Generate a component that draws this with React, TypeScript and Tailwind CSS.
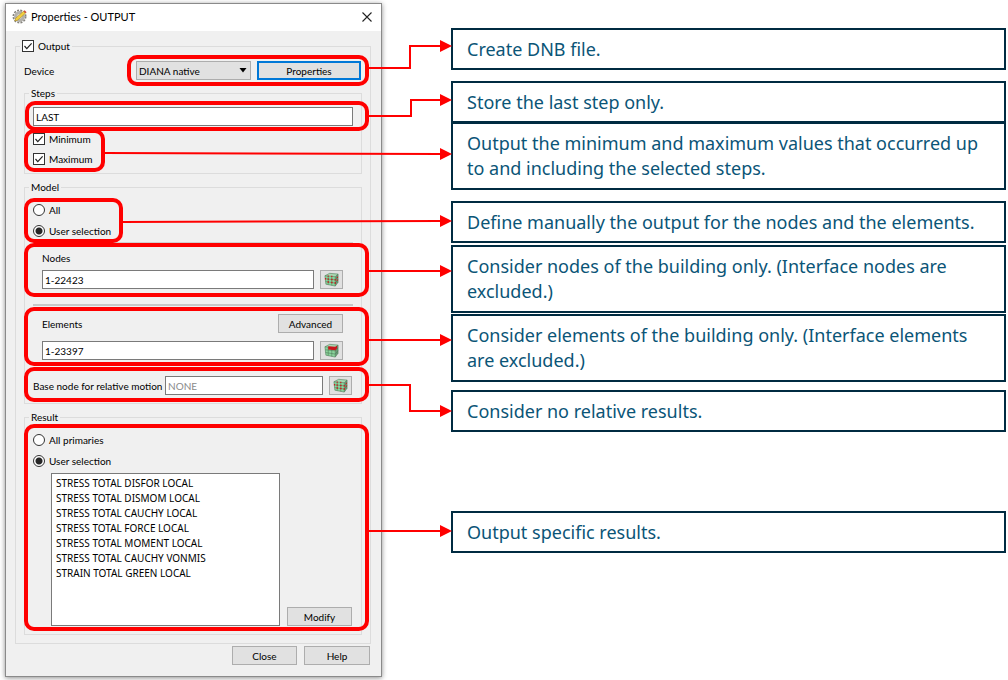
import type { ReactNode } from 'react';

const results = [
  'STRESS TOTAL DISFOR LOCAL',
  'STRESS TOTAL DISMOM LOCAL',
  'STRESS TOTAL CAUCHY LOCAL',
  'STRESS TOTAL FORCE LOCAL',
  'STRESS TOTAL MOMENT LOCAL',
  'STRESS TOTAL CAUCHY VONMIS',
  'STRAIN TOTAL GREEN LOCAL',
];

const callouts = [
  { text: 'Create DNB file.', box: 'mt-7 min-h-[42px]' },
  { text: 'Store the last step only.', box: 'mt-[11px] min-h-[42px]' },
  {
    text: 'Output the minimum and maximum values that occurred up to and including the selected steps.',
    box: '-mt-px min-h-[68px]',
  },
  { text: 'Define manually the output for the nodes and the elements.', box: 'mt-[11px] min-h-[42px]' },
  { text: 'Consider nodes of the building only. (Interface nodes are excluded.)', box: 'mt-0.5 min-h-[68px]' },
  {
    text: 'Consider elements of the building only. (Interface elements are excluded.)',
    box: 'mt-px min-h-[68px]',
  },
  { text: 'Consider no relative results.', box: 'mt-2 min-h-[42px]' },
  { text: 'Output specific results.', box: 'mt-[79px] min-h-[42px]' },
];

// Line from a highlighted group to the tip of its arrow head
const connectors = [
  { line: 'M368 68H410V46H441', y: 46 },
  { line: 'M369 116H411V100H441', y: 100 },
  { line: 'M104 153L441 154', y: 154 },
  { line: 'M122 222L441 221', y: 221 },
  { line: 'M368 271H441', y: 271 },
  { line: 'M368 340H441', y: 340 },
  { line: 'M368 385H410V411H441', y: 411 },
  { line: 'M368 531H441', y: 531 },
];

function Highlight({ className }: { className: string }) {
  return (
    <span
      aria-hidden="true"
      className={`pointer-events-none absolute rounded-[10px] border-4 border-[#ff0000] ${className}`}
    />
  );
}

function GroupBox({ title, className = '', children }: { title: string; className?: string; children: ReactNode }) {
  return (
    <fieldset className={`min-w-0 border border-[#dcdcdc] px-2 ${className}`}>
      <legend className="-ml-1 h-3.5 px-0.5 leading-3.5">{title}</legend>
      {children}
    </fieldset>
  );
}

function Checkbox({ id, label }: { id: string; label: string }) {
  return (
    <div className="flex items-center gap-1">
      <span className="relative flex">
        <input
          id={id}
          type="checkbox"
          defaultChecked
          className="peer size-3 appearance-none border border-[#333333] bg-white"
        />
        <svg
          className="pointer-events-none absolute inset-0 hidden size-3 peer-checked:block"
          viewBox="0 0 12 12"
          fill="none"
          stroke="#222"
          strokeWidth="1.2"
        >
          <path d="M2.5 6l2.3 2.6L9.6 3.3" />
        </svg>
      </span>
      <label htmlFor={id}>{label}</label>
    </div>
  );
}

function Radio({ id, name, label, checked }: { id: string; name: string; label: string; checked?: boolean }) {
  return (
    <div className="flex h-[21px] items-center gap-1">
      <input
        id={id}
        name={name}
        type="radio"
        defaultChecked={checked}
        className="size-3 shrink-0 appearance-none rounded-full border border-[#333333] bg-white checked:bg-[radial-gradient(circle,#262626_0_3px,#ffffff_4px)]"
      />
      <label htmlFor={id} className="whitespace-nowrap">
        {label}
      </label>
    </div>
  );
}

function Button({ className = '', children }: { className?: string; children: ReactNode }) {
  return (
    <button
      type="button"
      className={`flex h-[19px] shrink-0 items-center justify-center border border-[#adadad] bg-[#e1e1e1] ${className}`}
    >
      {children}
    </button>
  );
}

function MeshIcon({ variant }: { variant: 'nodes' | 'elements' }) {
  return (
    <svg className="size-[15px]" viewBox="0 0 16 16">
      <path d="M1 4l5-2.6 9 .8-3 2.8z" fill="#a9d8b2" />
      <path d="M1 4l11 1v10L2 13z" fill="#8bd49c" />
      <path d="M12 5l3-2.8V11l-3 4z" fill="#6a9c76" />
      <path
        d="M1 4l5-2.6 9 .8V11l-3 4-10-2zM1 4l11 1 3-2.8M12 5v10M4.5 4.3v9.2M8.3 4.7v9.6M1.4 7.2L12 8.4l3-3.2M1.7 10.2L12 11.8l3-3.6"
        fill="none"
        stroke="#4d7a58"
        strokeWidth="0.6"
      />
      {variant === 'nodes' ? (
        <path
          d="M3.8 6.8h1.5v1.5H3.8zM7.6 7.2h1.5v1.5H7.6zM11.3 7.6h1.5v1.5h-1.5zM3.8 9.9h1.5v1.5H3.8zM7.6 10.5h1.5V12H7.6zM11.3 11h1.5v1.5h-1.5zM1 6.5h1.2v1.4H1zM13.6 5h1.2v1.3h-1.2zM13.6 8h1.2v1.3h-1.2zM3.9 3.8h1.2V5H3.9zM7.7 4.1h1.2v1.2H7.7z"
          fill="#d3161c"
        />
      ) : (
        <path d="M4.5 3.4L12 4l2-1.4v3L12 7.6l-7.5-.7z" fill="#c9151b" />
      )}
    </svg>
  );
}

function MeshButton({ variant, label }: { variant: 'nodes' | 'elements'; label: string }) {
  return (
    <button
      type="button"
      aria-label={label}
      className="flex h-[19px] w-[23px] shrink-0 items-center justify-center border border-[#adadad] bg-[#e1e1e1]"
    >
      <MeshIcon variant={variant} />
    </button>
  );
}

function TitleIcon() {
  return (
    <svg className="size-[15px]" viewBox="0 0 15 15">
      <circle cx="7.5" cy="7.5" r="5.4" fill="#b4b2ac" />
      <circle cx="7.5" cy="7.5" r="6.2" fill="none" stroke="#85837d" strokeWidth="1.6" strokeDasharray="2 1.25" />
      <circle cx="7.5" cy="7.5" r="2.4" fill="#dddbd5" />
      <path d="M2.8 12l.9-2.8 7.8-7 2 2-7.9 7z" fill="#f2cf3f" stroke="#a98418" strokeWidth="0.5" />
      <path d="M11.5 2.2l1.1-1 2 2-1.1 1z" fill="#cf4a3c" />
    </svg>
  );
}

const field = 'h-[19px] min-w-0 flex-1 border border-[#7a7a7a] bg-white px-0.5 outline-none';

function PropertiesDialog() {
  return (
    <section
      aria-label="Properties - OUTPUT"
      className="w-[377px] shrink-0 border border-[#8a8a8a] bg-[#f0f0f0] font-[Lato,sans-serif] text-[10px] leading-3.5 text-black shadow-[0_1px_5px_rgba(0,0,0,0.45)]"
    >
      <header className="flex h-[27px] items-center bg-white pr-[9px] pb-0.5 pl-1.5">
        <TitleIcon />
        <h1 className="ml-1 flex-1 text-[11px]">Properties - OUTPUT</h1>
        <button type="button" aria-label="Close window">
          <svg className="size-2.5" viewBox="0 0 10 10" stroke="#222" strokeWidth="1.1">
            <path d="M0.5 0.5l9 9M9.5 0.5l-9 9" />
          </svg>
        </button>
      </header>

      <div className="pt-2 pr-2.5 pb-[11px] pl-[9px]">
        <fieldset className="min-w-0 border border-[#dcdcdc] px-2 pb-2">
          <legend className="-ml-1 h-3.5 px-0.5">
            <Checkbox id="output" label="Output" />
          </legend>

          <div className="flex items-center justify-between pt-2">
            <label htmlFor="device">Device</label>
            <div className="relative flex gap-1.5 pr-px">
              <span className="relative flex">
                <select
                  id="device"
                  className="h-[19px] w-[115px] appearance-none border border-[#adadad] bg-[#e1e1e1] px-0.5"
                >
                  <option>DIANA native</option>
                </select>
                <svg className="pointer-events-none absolute top-[7px] right-1 h-[5px] w-2" viewBox="0 0 8 5">
                  <path d="M0.5 0h7L4 4.6z" />
                </svg>
              </span>
              <button
                type="button"
                className="h-[19px] w-[104px] border-2 border-[#0078d7] bg-[#e1e1e1] leading-3.5"
              >
                Properties
              </button>
              <Highlight className="-top-1.5 -right-[7px] -bottom-1.5 -left-[9px]" />
            </div>
          </div>

          <GroupBox title="Steps" className="mt-1.5 pb-1">
            <div className="relative mt-[7px] flex">
              <input aria-label="Steps" defaultValue="LAST" className={field} />
              <Highlight className="-top-1.5 -right-4 -bottom-[5px] -left-2" />
            </div>
            <div className="relative mt-[3px] w-14">
              <div className="flex h-5 items-center">
                <Checkbox id="minimum" label="Minimum" />
              </div>
              <div className="flex h-5 items-center">
                <Checkbox id="maximum" label="Maximum" />
              </div>
              <Highlight className="top-0 -right-4 -bottom-[3px] -left-[9px]" />
            </div>
          </GroupBox>

          <GroupBox title="Model" className="mt-1.5 pb-2">
            <div className="relative mt-[5px] w-[78px]">
              <Radio id="model-all" name="model" label="All" />
              <Radio id="model-user" name="model" label="User selection" checked />
              <Highlight className="-top-px -right-3 -bottom-0.5 -left-[9px]" />
            </div>
            <hr className="mt-px border-[#d0d0d0]" />

            <div className="relative pt-2 pr-2.5 pl-[9px]">
              <label htmlFor="nodes" className="block">
                Nodes
              </label>
              <div className="mt-[5px] flex gap-1.5">
                <input id="nodes" defaultValue="1-22423" className={field} />
                <MeshButton variant="nodes" label="Select nodes" />
              </div>
              <Highlight className="top-0 -right-4 -bottom-2 -left-[9px]" />
            </div>
            <hr className="mt-[15px] border-t-2 border-[#c8c8c8]" />

            <div className="relative pt-2 pr-2.5 pl-[9px]">
              <div className="flex items-center justify-between">
                <label htmlFor="elements">Elements</label>
                <Button className="w-[65px]">Advanced</Button>
              </div>
              <div className="mt-2 flex gap-1.5">
                <input id="elements" defaultValue="1-23397" className={field} />
                <MeshButton variant="elements" label="Select elements" />
              </div>
              <Highlight className="top-px -right-4 -bottom-1.5 -left-[9px]" />
            </div>

            <div className="relative mt-4 flex items-center gap-1.5 pr-px">
              <label htmlFor="base-node" className="w-[126px] whitespace-nowrap">
                Base node for relative motion
              </label>
              <input
                id="base-node"
                placeholder="NONE"
                className={`${field} placeholder:text-[#8a8a8a] placeholder:opacity-100`}
              />
              <MeshButton variant="nodes" label="Select base node" />
              <Highlight className="-top-[9px] -right-4 -bottom-[7px] -left-[9px]" />
            </div>
          </GroupBox>

          <GroupBox title="Result" className="mt-1.5 pb-2">
            <div className="relative pt-[5px]">
              <Radio id="result-all" name="result" label="All primaries" />
              <Radio id="result-user" name="result" label="User selection" checked />
              <div className="mt-0.5 flex items-end justify-between pr-px pl-[18px]">
                <select
                  multiple
                  size={7}
                  aria-label="Selected results"
                  className="h-[153px] w-[229px] appearance-none border border-[#7a7a7a] bg-white py-px pl-0.5 font-['Noto_Sans',sans-serif]"
                >
                  {results.map((result) => (
                    <option key={result} className="flex h-[15px] min-h-[15px] items-center p-0 px-0.5">
                      {result}
                    </option>
                  ))}
                </select>
                <Button className="w-[65px]">Modify</Button>
              </div>
              <Highlight className="top-0 -right-4 -bottom-[5px] -left-[9px]" />
            </div>
          </GroupBox>
        </fieldset>

        <div className="mt-0.5 flex justify-end gap-[7px] pr-px">
          <Button className="w-[65px]">Close</Button>
          <Button className="w-[66px]">Help</Button>
        </div>
      </div>
    </section>
  );
}

export default function App() {
  return (
    <main className="relative flex min-h-screen items-start bg-white pr-0.5 pl-[5px]">
      <div className="shrink-0 pt-[3px] pb-[3px]">
        <PropertiesDialog />
      </div>

      <ol className="ml-[69px] min-w-0 flex-1 font-['Noto_Sans',sans-serif] text-[18px] leading-[25px] text-[#0b5577]">
        {callouts.map(({ text, box }) => (
          <li key={text} className={`flex items-center border-2 border-[#002b41] px-3.5 py-1.5 ${box}`}>
            {text}
          </li>
        ))}
      </ol>

      <svg
        aria-hidden="true"
        className="pointer-events-none absolute top-0 left-0 h-[680px] w-[452px]"
        viewBox="0 0 452 680"
        fill="none"
        stroke="#ff0000"
        strokeWidth="2"
      >
        {connectors.map(({ line, y }) => (
          <g key={line}>
            <path d={line} />
            <path d={`M440 ${y - 6}L452 ${y}L440 ${y + 6}z`} fill="#ff0000" stroke="none" />
          </g>
        ))}
      </svg>
    </main>
  );
}
